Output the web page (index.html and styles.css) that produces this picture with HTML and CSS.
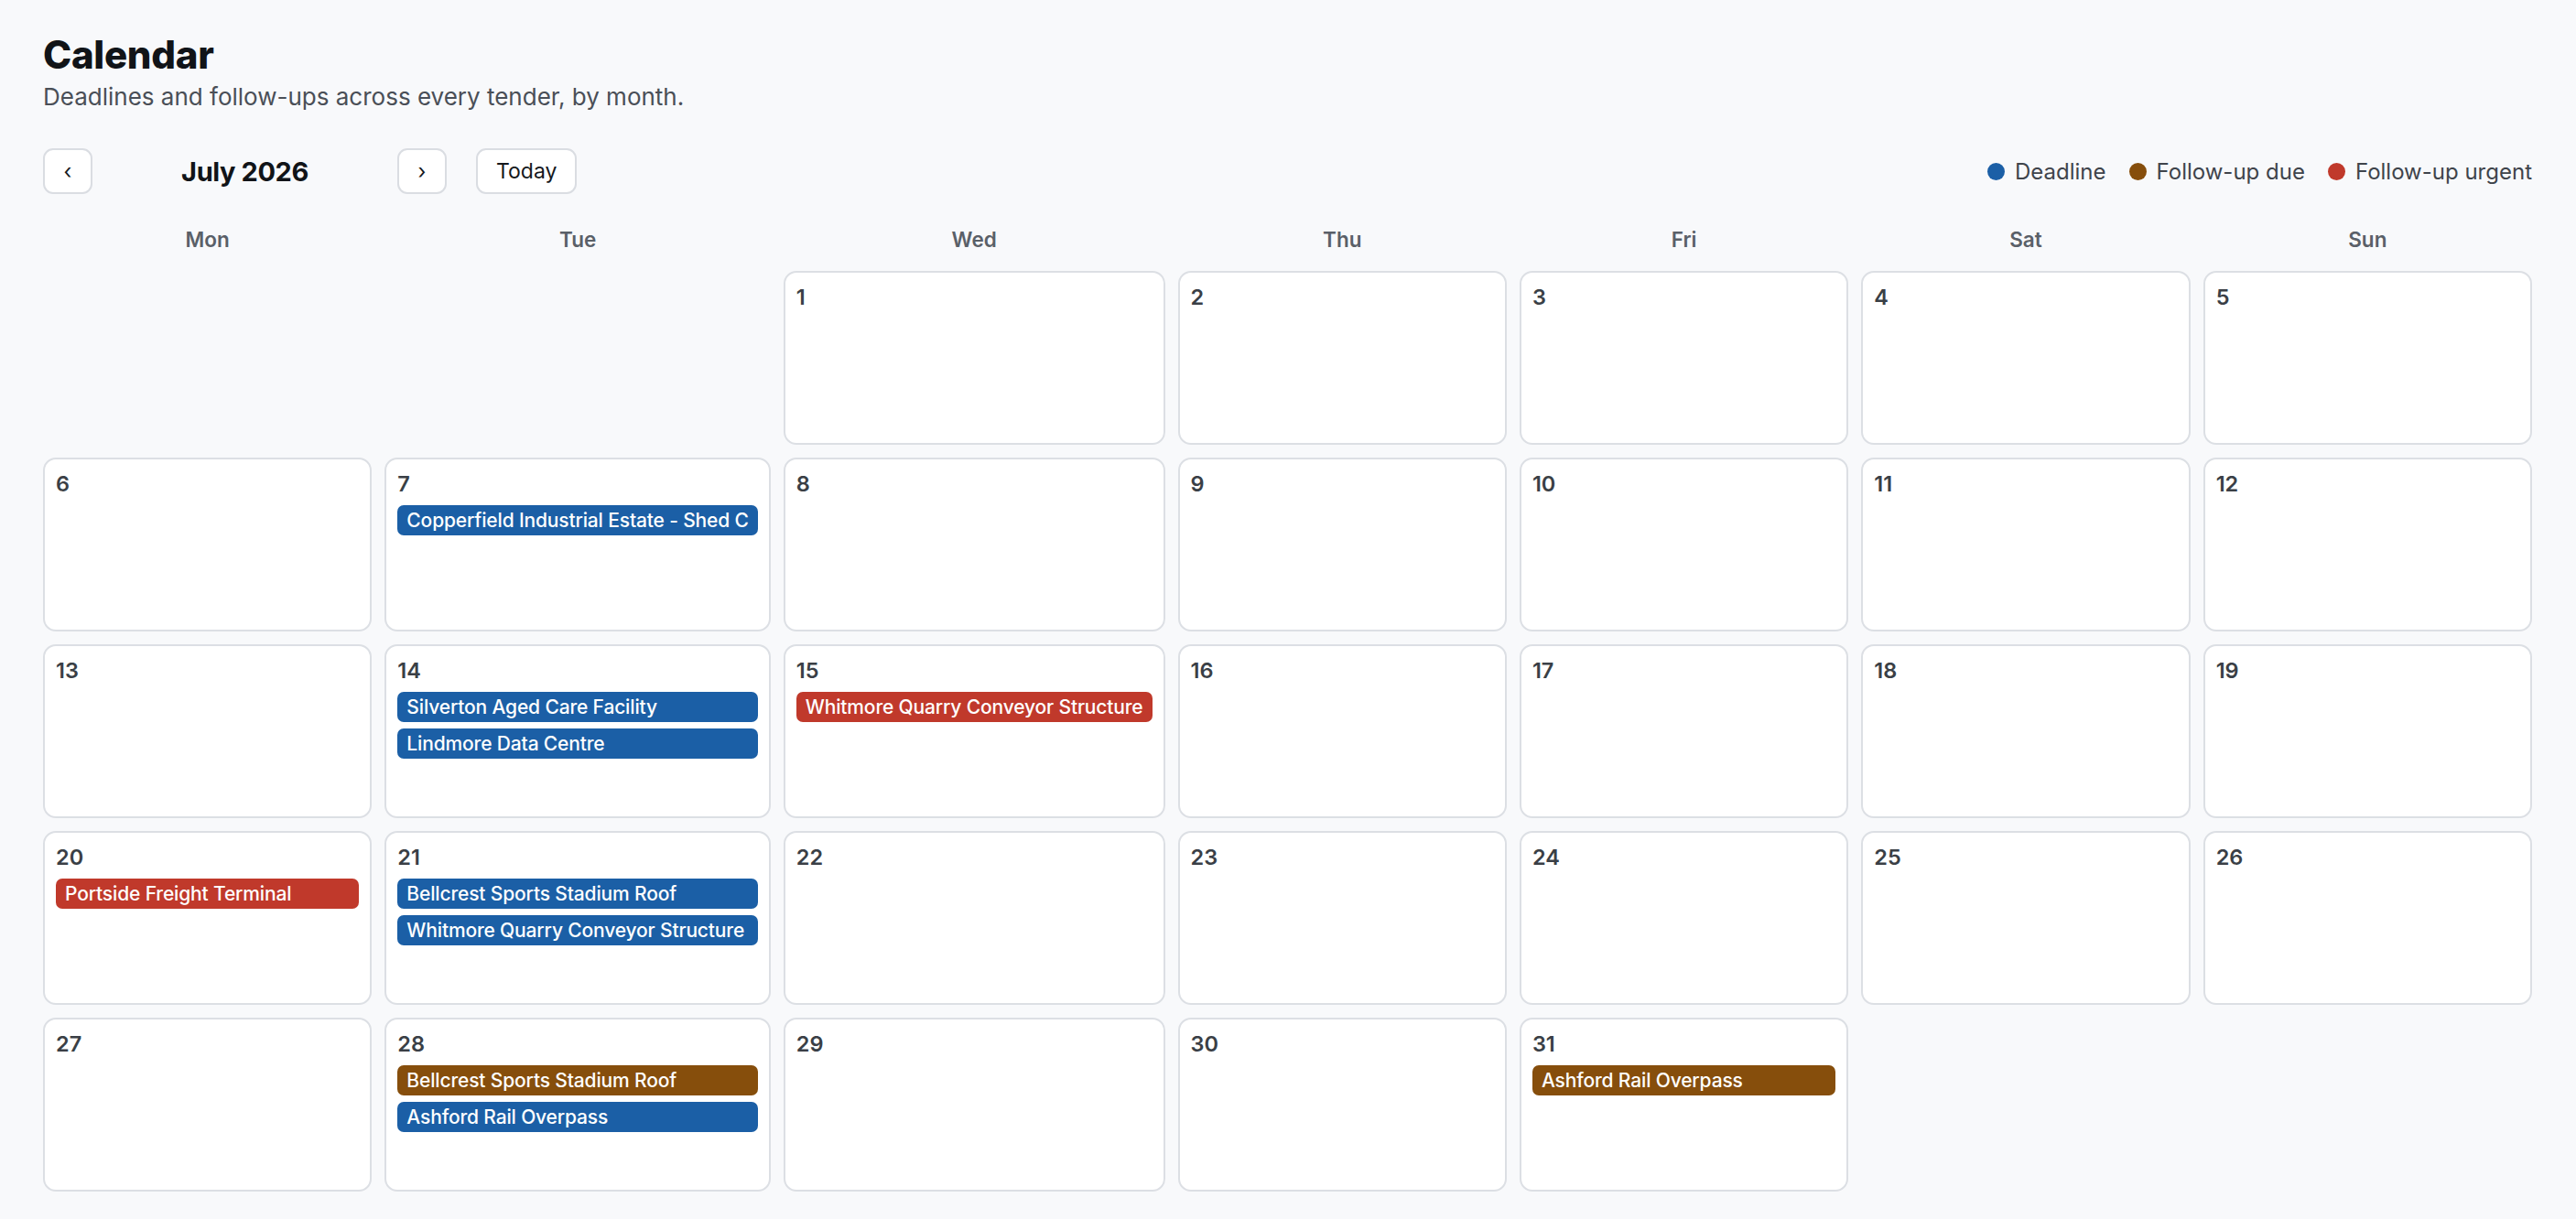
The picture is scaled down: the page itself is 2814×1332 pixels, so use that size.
FILE: index.html
```html
<!DOCTYPE html>
<html lang="en">
<head>
<meta charset="utf-8">
<title>Calendar</title>
<link rel="stylesheet" href="styles.css">
</head>
<body>
<div class="page">
  <h1>Calendar</h1>
  <p class="lede">Deadlines and follow-ups across every tender, by month.</p>

  <div class="toolbar">
    <div class="nav">
      <button class="btn btn-icon" title="Previous month">&lsaquo;</button>
      <div class="month">July 2026</div>
      <button class="btn btn-icon" title="Next month">&rsaquo;</button>
      <button class="btn btn-today">Today</button>
    </div>
    <ul class="legend">
      <li><span class="dot deadline"></span>Deadline</li>
      <li><span class="dot due"></span>Follow-up due</li>
      <li><span class="dot urgent"></span>Follow-up urgent</li>
    </ul>
  </div>

  <div class="month-grid">
    <div class="dow">Mon</div>
    <div class="dow">Tue</div>
    <div class="dow">Wed</div>
    <div class="dow">Thu</div>
    <div class="dow">Fri</div>
    <div class="dow">Sat</div>
    <div class="dow">Sun</div>

    <!-- week 1 -->
    <div class="blank"></div>
    <div class="blank"></div>
    <div class="day"><span class="num">1</span></div>
    <div class="day"><span class="num">2</span></div>
    <div class="day"><span class="num">3</span></div>
    <div class="day"><span class="num">4</span></div>
    <div class="day"><span class="num">5</span></div>

    <!-- week 2 -->
    <div class="day"><span class="num">6</span></div>
    <div class="day"><span class="num">7</span>
      <div class="chip deadline">Copperfield Industrial Estate - Shed C</div>
    </div>
    <div class="day"><span class="num">8</span></div>
    <div class="day"><span class="num">9</span></div>
    <div class="day"><span class="num">10</span></div>
    <div class="day"><span class="num">11</span></div>
    <div class="day"><span class="num">12</span></div>

    <!-- week 3 -->
    <div class="day"><span class="num">13</span></div>
    <div class="day"><span class="num">14</span>
      <div class="chip deadline">Silverton Aged Care Facility</div>
      <div class="chip deadline">Lindmore Data Centre</div>
    </div>
    <div class="day"><span class="num">15</span>
      <div class="chip urgent">Whitmore Quarry Conveyor Structure</div>
    </div>
    <div class="day"><span class="num">16</span></div>
    <div class="day"><span class="num">17</span></div>
    <div class="day"><span class="num">18</span></div>
    <div class="day"><span class="num">19</span></div>

    <!-- week 4 -->
    <div class="day"><span class="num">20</span>
      <div class="chip urgent">Portside Freight Terminal</div>
    </div>
    <div class="day"><span class="num">21</span>
      <div class="chip deadline">Bellcrest Sports Stadium Roof</div>
      <div class="chip deadline">Whitmore Quarry Conveyor Structure</div>
    </div>
    <div class="day"><span class="num">22</span></div>
    <div class="day"><span class="num">23</span></div>
    <div class="day"><span class="num">24</span></div>
    <div class="day"><span class="num">25</span></div>
    <div class="day"><span class="num">26</span></div>

    <!-- week 5 -->
    <div class="day"><span class="num">27</span></div>
    <div class="day"><span class="num">28</span>
      <div class="chip due">Bellcrest Sports Stadium Roof</div>
      <div class="chip deadline">Ashford Rail Overpass</div>
    </div>
    <div class="day"><span class="num">29</span></div>
    <div class="day"><span class="num">30</span></div>
    <div class="day"><span class="num">31</span>
      <div class="chip due">Ashford Rail Overpass</div>
    </div>
  </div>
</div>
</body>
</html>
```

FILE: styles.css
```css
* {
    box-sizing: border-box;
}
body {
    margin: 0;
    background: #f8f9fb;
    font-family: Inter, "Noto Sans", sans-serif;
    color: #111418;
}
.page {
    padding: 35px 48px 30px 47px;
}
h1 {
    margin: 0;
    font-size: 42px;
    line-height: 50px;
    font-weight: 800;
    letter-spacing: -0.3px;
}
.lede {
    margin: 2px 0 0;
    font-size: 26px;
    line-height: 38px;
    color: #4a4f57;
}

/* month switcher + legend */
.toolbar {
    display: flex;
    align-items: center;
    justify-content: space-between;
    margin-top: 37px;
}
.nav {
    display: flex;
    align-items: center;
}
.btn {
    height: 50px;
    padding: 0 20px;
    border: 2px solid #dadde2;
    border-radius: 11px;
    background: #fff;
    font-family: inherit;
    font-size: 23px;
    color: #15181c;
}
.btn-icon {
    width: 54px;
    padding: 0;
}
.btn-today {
    margin-left: 32px;
}
.month {
    width: 333px;
    text-align: center;
    font-size: 29px;
    font-weight: 700;
    letter-spacing: -0.4px;
}
.legend {
    display: flex;
    align-items: center;
    gap: 25px;
    margin: 0;
    padding: 0;
    list-style: none;
    font-size: 24px;
    color: #3f444b;
}
.legend li {
    display: flex;
    align-items: center;
    gap: 11px;
}
.dot {
    width: 19px;
    height: 19px;
    border-radius: 50%;
}
.dot.deadline { background: #1b5fa6; }
.dot.due { background: #864e0c; }
.dot.urgent { background: #c0392b; }

/* calendar */
.month-grid {
    display: grid;
    grid-template-columns: repeat(7, 1fr);
    gap: 14px;
    margin-top: 29px;
}
.dow {
    text-align: center;
    font-size: 22.5px;
    line-height: 41px;
    font-weight: 600;
    color: #5a6068;
}
.day {
    height: 190px;
    padding: 13px 12px;
    background: #fff;
    border: 2px solid #dcdfe4;
    border-radius: 14px;
    display: flex;
    flex-direction: column;
    gap: 7px;
}
.num {
    margin-bottom: 2px;
    font-size: 23.5px;
    line-height: 28px;
    font-weight: 600;
    color: #3a3f46;
}
.chip {
    padding: 3px 10px;
    border-radius: 7px;
    font-size: 21px;
    line-height: 27px;
    font-weight: 500;
    letter-spacing: -0.15px;
    color: #fff;
    white-space: nowrap;
}
.chip.deadline { background: #1b5fa6; }
.chip.due { background: #864e0c; }
.chip.urgent { background: #c0392b; }
```
